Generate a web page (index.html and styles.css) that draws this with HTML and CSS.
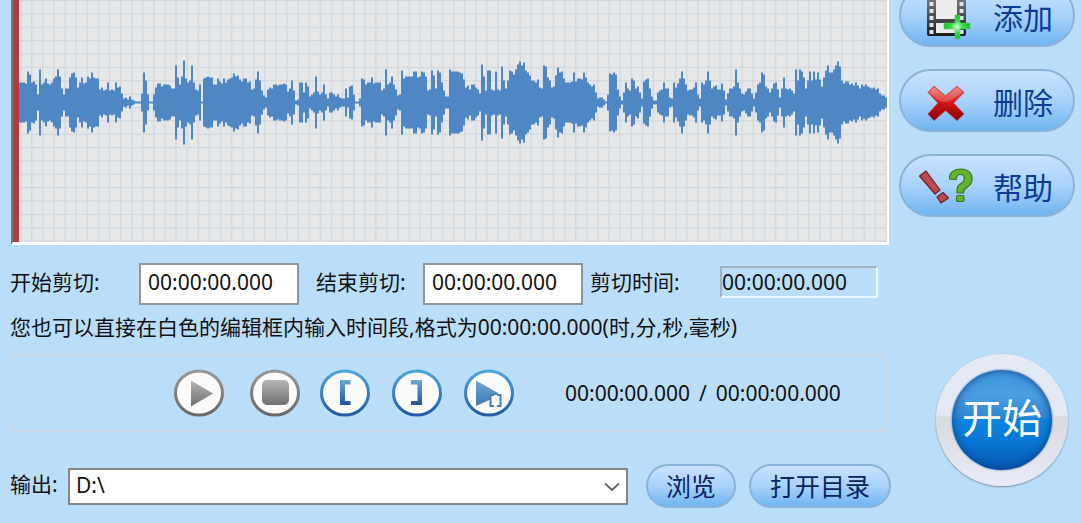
FILE: index.html
```html
<!DOCTYPE html>
<html lang="zh-CN">
<head>
    <meta charset="utf-8">
    <title>音频剪切</title>
    <link rel="stylesheet" href="styles.css">
</head>
<body>
    <div class="app">
        <main class="editor">
            <div class="waveform">
                <svg viewBox="0 0 868 242" preserveAspectRatio="none">
                    <defs>
                        <pattern id="grid" x="1" y="0" width="11.1" height="13.36" patternUnits="userSpaceOnUse">
                            <path d="M0 .5H11.1M.7 0V13.36" stroke="#d3d7d9" stroke-width="1.2" fill="none"/>
                        </pattern>
                    </defs>
                    <rect width="868" height="242" fill="url(#grid)"/>
                    <path id="wave" fill="#4f86c4"/>
                </svg>
            </div>

            <div class="times">
                <label for="start-time">开始剪切:</label>
                <input type="text" id="start-time" value="00:00:00.000">
                <label for="end-time" class="end-label">结束剪切:</label>
                <input type="text" id="end-time" value="00:00:00.000">
                <label for="cut-time" class="cut-label">剪切时间:</label>
                <output id="cut-time" class="readout">00:00:00.000</output>
            </div>

            <p class="hint">您也可以直接在白色的编辑框内输入时间段,格式为00:00:00.000(时,分,秒,毫秒)</p>

            <div class="player">
                <div class="playback">
                    <button class="round" aria-label="播放">
                        <svg viewBox="0 0 50 50">
                            <defs>
                                <linearGradient id="gray" x1="0" y1="0" x2="0" y2="1">
                                    <stop offset="0" stop-color="#b5b5b5"/>
                                    <stop offset="1" stop-color="#707070"/>
                                </linearGradient>
                                <linearGradient id="ringGray" x1="0" y1="0" x2="0" y2="1">
                                    <stop offset="0" stop-color="#989898"/>
                                    <stop offset="1" stop-color="#686868"/>
                                </linearGradient>
                                <linearGradient id="ringBlue" x1="0" y1="0" x2="0" y2="1">
                                    <stop offset="0" stop-color="#4ba5d8"/>
                                    <stop offset="1" stop-color="#2459a6"/>
                                </linearGradient>
                                <linearGradient id="blue" x1="0" y1="0" x2="0" y2="1">
                                    <stop offset="0" stop-color="#6da9d2"/>
                                    <stop offset="1" stop-color="#24529b"/>
                                </linearGradient>
                                <linearGradient id="blueSoft" x1="0" y1="0" x2="0" y2="1">
                                    <stop offset="0" stop-color="#6da9d2"/>
                                    <stop offset="1" stop-color="#4079b5"/>
                                </linearGradient>
                            </defs>
                            <ellipse cx="25" cy="25" rx="23.5" ry="22" fill="#fafafa" stroke="url(#ringGray)" stroke-width="3"/>
                            <path d="M17 12.500L39 25.500L17 38.500Z" fill="url(#gray)"/>
                        </svg>
                    </button>
                    <button class="round" aria-label="停止">
                        <svg viewBox="0 0 50 50">
                            <ellipse cx="25" cy="25" rx="23.5" ry="22" fill="#fafafa" stroke="url(#ringGray)" stroke-width="3"/>
                            <rect x="12" y="12" width="27" height="25" rx="5" fill="url(#gray)"/>
                        </svg>
                    </button>
                </div>
                <div class="marks">
                    <button class="round" aria-label="设为开始">
                        <svg viewBox="0 0 50 50">
                            <ellipse cx="25" cy="25" rx="23.5" ry="22" fill="#fafafa" stroke="url(#ringBlue)" stroke-width="3"/>
                            <path d="M20 12H30.500V16.500H25V33H30.500V37H20Z" fill="url(#blue)"/>
                        </svg>
                    </button>
                    <button class="round" aria-label="设为结束">
                        <svg viewBox="0 0 50 50">
                            <ellipse cx="25" cy="25" rx="23.5" ry="22" fill="#fafafa" stroke="url(#ringBlue)" stroke-width="3"/>
                            <path d="M30 12H19V16.500H25.500V33H19V37H30Z" fill="url(#blue)"/>
                        </svg>
                    </button>
                    <button class="round" aria-label="播放选区">
                        <svg viewBox="0 0 50 50">
                            <ellipse cx="25" cy="25" rx="23.5" ry="22" fill="#fafafa" stroke="url(#ringBlue)" stroke-width="3"/>
                            <path d="M12 12.500L34 25V28L12 38Z" fill="url(#blueSoft)"/>
                            <path d="M26 27H37V38H26Z" fill="#fafafa"/>
                            <path d="M30 27H26.500V38H30M33 27H36.500V38H33" fill="none" stroke="#4b7db8" stroke-width="2"/>
                        </svg>
                    </button>
                </div>
                <div class="position"><span>00:00:00.000</span><span>/</span><span>00:00:00.000</span></div>
            </div>

            <div class="output">
                <label for="folder">输出:</label>
                <div class="folder">
                    <select id="folder">
                        <option>D:\</option>
                    </select>
                    <svg class="arrow" viewBox="0 0 16 10"><path d="M1 1.500L8 8L15 1.500" fill="none" stroke="#606060" stroke-width="1.8"/></svg>
                </div>
                <button class="pill browse">浏览</button>
                <button class="pill open">打开目录</button>
            </div>
        </main>

        <aside class="sidebar">
            <button class="pill action">
                <svg viewBox="0 0 56 46">
                    <defs>
                        <linearGradient id="film" x1="0" y1="0" x2="0" y2="1">
                            <stop offset="0" stop-color="#777"/>
                            <stop offset="1" stop-color="#1c1c1c"/>
                        </linearGradient>
                        <radialGradient id="plus">
                            <stop offset="0" stop-color="#d8ffd8"/>
                            <stop offset=".45" stop-color="#3cdc4a"/>
                            <stop offset="1" stop-color="#10c820"/>
                        </radialGradient>
                    </defs>
                    <rect x="9" y="4" width="39" height="37" rx="2" fill="url(#film)"/>
                    <path d="M18 5H39V24H18ZM18 28H39V38H18Z" fill="#ececec"/>
                    <path d="M13.500 7V40M43.500 7V40" stroke="#d8e4ef" stroke-width="4" stroke-dasharray="4 3"/>
                    <path d="M37 20H42V28H52V34H42V44H37V34H26V28H37Z" fill="url(#plus)" stroke="#6cbf78" stroke-width=".6"/>
                </svg>
                <span>添加</span>
            </button>
            <button class="pill action">
                <svg viewBox="0 0 56 46">
                    <defs>
                        <linearGradient id="cross" x1="0" y1="0" x2="0" y2="1">
                            <stop offset="0" stop-color="#f07070"/>
                            <stop offset=".45" stop-color="#d81818"/>
                            <stop offset="1" stop-color="#850000"/>
                        </linearGradient>
                    </defs>
                    <path d="M16 6L27.500 16L39 6L46 12.500L35.500 23L46 34L39 40.500L27.500 30.500L16 40.500L10 34L20 23L10 12.500Z" fill="url(#cross)" stroke="#bd3035" stroke-width=".7" stroke-linejoin="round"/>
                    <path d="M16 7L27.500 17L39 7L44 12L34 20Q27 24 20 20L11.500 12.500Z" fill="#fff" opacity=".2"/>
                </svg>
                <span>删除</span>
            </button>
            <button class="pill action">
                <svg viewBox="0 0 56 46">
                    <path d="M1.500 11L8 6L22 25L17 29Z" fill="#bd4a50" stroke="#6b2227" stroke-width="1.2" stroke-linejoin="round"/>
                    <path d="M19 32L25 27.500L30.500 33L23 38Z" fill="#bd4a50" stroke="#6b2227" stroke-width="1.2" stroke-linejoin="round"/>
                    <path d="M31.500 14C31 7 37 4 43 4C50 4 54 8 54 14C54 19 51 21 48 23C46 24 45.500 25 45.500 28H39C39 23 39 21 43 18.500C48 15.500 47 9.500 42.500 9.500C39.500 9.500 38.500 11 38 14.500Z" fill="#62b52b" stroke="#34731a" stroke-width="1.2"/>
                    <rect x="38.500" y="30.500" width="7.500" height="6" rx="2" fill="#62b52b" stroke="#34731a" stroke-width="1.2"/>
                </svg>
                <span>帮助</span>
            </button>
            <button class="start"><span>开始</span></button>
        </aside>
    </div>

    <script>
        // Peak heights, one for every two units along the track
        const peaks = [
            20,20,20,19,31,28,20,21,18,8,33,18,20,24,19,18,20,24,26,33,26,14,8,14,14,
            25,29,30,25,15,20,25,19,20,26,24,30,25,24,24,13,15,12,13,20,12,13,12,20,15,
            16,9,4,5,3,6,3,2,1,1,1,9,30,22,8,1,1,8,15,19,19,16,18,18,18,
            17,14,14,37,25,18,26,42,24,20,22,37,20,13,12,18,1,24,25,26,25,25,18,18,24,
            21,19,24,20,23,24,25,29,26,27,23,21,24,24,20,21,13,14,23,31,22,12,7,5,13,
            15,14,18,18,17,18,18,19,18,11,14,22,12,2,3,20,
            20,10,20,16,6,8,10,26,11,8,10,18,8,4,10,10,8,6,8,5,4,4,14,5,16,
            17,8,1,1,4,24,23,18,20,20,25,19,20,20,20,12,14,33,18,20,26,18,13,7,8,
            32,24,26,26,26,26,31,31,25,26,31,30,26,12,13,32,27,14,32,30,20,12,6,6,33,
            31,31,31,31,30,29,23,15,17,13,18,18,15,13,9,38,26,12,32,32,13,12,31,13,12,
            36,22,14,22,32,31,28,33,38,41,37,40,32,30,27,22,22,20,23,15,14,37,36,25,22,
            15,16,27,35,30,31,24,20,20,20,21,30,21,24,24,23,30,25,20,18,16,18,10,4,5,
            5,3,1,8,29,28,30,28,13,6,2,10,20,14,12,24,22,14,16,10,4,21,23,24,14,
            6,2,2,10,12,13,20,14,14,5,4,20,15,19,24,31,24,18,12,13,13,15,20,8,4,
            20,18,22,31,22,14,16,17,13,13,19,12,3,9,14,14,16,33,20,14,9,8,11,14,14,
            9,4,10,18,20,30,28,16,14,10,14,19,20,13,5,14,25,14,13,14,12,9,33,22,33,
            31,25,14,22,31,22,31,23,30,23,16,25,32,37,30,30,33,37,41,36,22,19,21,21,18,
            19,17,20,17,14,18,16,18,16,15,14,15,13,14,9,7,7,5
        ];

        // Draw each peak as a bar around the middle line
        const middle = 102.5;
        let d = '';
        peaks.forEach((peak, i) => {
            d += `M${i * 2} ${middle - peak}h2v${peak * 2}h-2z`;
        });
        document.getElementById('wave').setAttribute('d', d);
    </script>
</body>
</html>
```

FILE: styles.css
```css
* {
    box-sizing: border-box;
}

body {
    margin: 0;
    background-color: #badefa;
    color: #111;
    font-family: "Noto Sans", "Noto Sans CJK SC", sans-serif;
    font-size: 21px;
    line-height: 30px;
}

button,
input,
select {
    font: inherit;
    color: inherit;
}

button {
    padding: 0;
    border: none;
    background: none;
    cursor: pointer;
}

.app {
    display: flex;
    gap: 8px;
    padding: 0 6px 0 10px;
}

.editor {
    flex: 1;
    min-width: 0;
}

.waveform {
    height: 245px;
    margin: 0 2px 0 1px;
    background-color: #e5e7e9;
    border-left: 2px solid #777;
    border-right: 2px solid #fff;
    border-bottom: 3px solid #fff;
}

.waveform svg {
    display: block;
    width: 100%;
    height: 100%;
    border-left: 6px solid #b2393e;
}

.times {
    display: grid;
    grid-template-columns: 129px 160px 124px 160px 137px 158px;
    align-items: center;
    margin-top: 18px;
}

.times label,
.output label {
    padding-bottom: 4px;
}

.times .end-label {
    padding-left: 17px;
}

.times .cut-label {
    padding-left: 7px;
}

.times input {
    width: 100%;
    height: 42px;
    padding: 0 7px 4px;
    background-color: #fff;
    border: 2px solid #939393;
}

.readout {
    height: 32px;
    margin-bottom: 4px;
    line-height: 28px;
    border: 2px solid;
    border-color: #a3b1bd #e9f5ff #e9f5ff #a3b1bd;
}

.hint {
    margin: 7px 0 12px;
    white-space: nowrap;
}

.player {
    display: flex;
    align-items: center;
    height: 78px;
    margin-right: 4px;
    padding-left: 162px;
    border: 2px solid #cad8e5;
}

.playback,
.marks {
    display: flex;
}

.playback {
    gap: 26px;
    margin-right: 20px;
}

.marks {
    gap: 22px;
}

.round {
    width: 50px;
    height: 50px;
}

.round svg {
    display: block;
}

.position {
    display: flex;
    gap: 9px;
    margin-left: 51px;
}

.output {
    display: flex;
    align-items: center;
    margin-top: 32px;
}

.output label {
    width: 58px;
}

.folder {
    position: relative;
    flex: 1;
    margin-right: 18px;
}

.folder select {
    display: block;
    width: 100%;
    height: 37px;
    padding: 0 6px 2px;
    appearance: none;
    background-color: #fff;
    border: 2px solid #858585;
    border-radius: 0;
}

.arrow {
    position: absolute;
    right: 8px;
    top: 14px;
    width: 16px;
    height: 10px;
    pointer-events: none;
}

.pill {
    background: linear-gradient(#c9e2ff, #a9d2fa 50%, #70b5f1);
    border: 2px solid #8db2d9;
    border-radius: 32px;
    color: #0d3b96;
}

.browse,
.open {
    height: 44px;
    font-size: 25px;
    color: #0b2262;
}

.browse {
    width: 90px;
    margin-right: 13px;
}

.open {
    width: 142px;
}

.sidebar {
    display: flex;
    flex-direction: column;
    gap: 22px;
    width: 176px;
    margin-top: -16px;
}

.action {
    display: flex;
    align-items: center;
    gap: 19px;
    height: 63px;
    padding: 4px 0 0 17px;
    font-size: 30px;
}

.action svg {
    width: 56px;
    height: 46px;
}

.start {
    align-self: flex-end;
    width: 132px;
    height: 132px;
    margin: 115px 7px 0 0;
    padding: 16px;
    border-radius: 50%;
    background: linear-gradient(#e4e9f4 0 46%, #d8dae0 48%, #e9ecf7);
    box-shadow: 0 1px 2px #7c8a99;
}

.start span {
    display: flex;
    align-items: center;
    justify-content: center;
    height: 100%;
    padding-bottom: 4px;
    border-radius: 50%;
    background: linear-gradient(#3e97de, #4b9ee0 25%, #2e86d4 47%, #0a85e0 50%, #0a78d6 70%, #0757b0);
    box-shadow: inset 0 0 8px #0a3f87, 0 0 2px #1c4a86;
    color: #fff;
    font-size: 40px;
}
```
